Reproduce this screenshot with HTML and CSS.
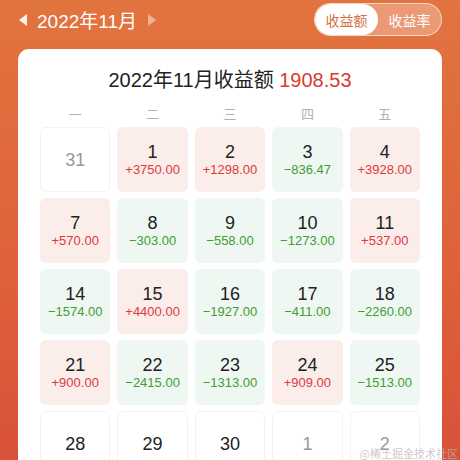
FILE: index.html
```html
<!DOCTYPE html>
<html lang="zh">
<head>
<meta charset="utf-8">
<link rel="stylesheet" href="styles.css">
</head>
<body>
<div class="page">
  <header class="top">
    <div class="month">
      <span class="tri tri-left"></span>
      <span class="month-text">2022年11月</span>
      <span class="tri tri-right"></span>
    </div>
    <div class="toggle">
      <span class="seg active">收益额</span>
      <span class="seg">收益率</span>
    </div>
  </header>
  <section class="card">
    <h1 class="title">2022年11月收益额 <span class="total">1908.53</span></h1>
    <div class="weekdays">
      <span>一</span><span>二</span><span>三</span><span>四</span><span>五</span>
    </div>
    <div class="grid">
      <div class="cell other"><span class="day">31</span></div>
      <div class="cell up"><span class="day">1</span><span class="amt">+3750.00</span></div>
      <div class="cell up"><span class="day">2</span><span class="amt">+1298.00</span></div>
      <div class="cell down"><span class="day">3</span><span class="amt">−836.47</span></div>
      <div class="cell up"><span class="day">4</span><span class="amt">+3928.00</span></div>

      <div class="cell up"><span class="day">7</span><span class="amt">+570.00</span></div>
      <div class="cell down"><span class="day">8</span><span class="amt">−303.00</span></div>
      <div class="cell down"><span class="day">9</span><span class="amt">−558.00</span></div>
      <div class="cell down"><span class="day">10</span><span class="amt">−1273.00</span></div>
      <div class="cell up"><span class="day">11</span><span class="amt">+537.00</span></div>

      <div class="cell down"><span class="day">14</span><span class="amt">−1574.00</span></div>
      <div class="cell up"><span class="day">15</span><span class="amt">+4400.00</span></div>
      <div class="cell down"><span class="day">16</span><span class="amt">−1927.00</span></div>
      <div class="cell down"><span class="day">17</span><span class="amt">−411.00</span></div>
      <div class="cell down"><span class="day">18</span><span class="amt">−2260.00</span></div>

      <div class="cell up"><span class="day">21</span><span class="amt">+900.00</span></div>
      <div class="cell down"><span class="day">22</span><span class="amt">−2415.00</span></div>
      <div class="cell down"><span class="day">23</span><span class="amt">−1313.00</span></div>
      <div class="cell up"><span class="day">24</span><span class="amt">+909.00</span></div>
      <div class="cell down"><span class="day">25</span><span class="amt">−1513.00</span></div>

      <div class="cell empty"><span class="day">28</span></div>
      <div class="cell empty"><span class="day">29</span></div>
      <div class="cell empty"><span class="day">30</span></div>
      <div class="cell other"><span class="day">1</span></div>
      <div class="cell other"><span class="day">2</span></div>
    </div>
  </section>
  <div class="watermark">@稀土掘金技术社区</div>
</div>
</body>
</html>
```

FILE: styles.css
```css
html, body {
  margin: 0;
  padding: 0;
}
body {
  width: 460px;
  height: 460px;
  overflow: hidden;
  font-family: "Noto Sans", "Noto Sans CJK SC", "Liberation Sans", sans-serif;
  background: linear-gradient(180deg, #e2743f 0%, #de6139 60%, #d9513a 100%);
}
.page {
  position: relative;
  width: 460px;
  height: 460px;
  overflow: hidden;
}
.top {
  height: 49px;
  display: flex;
  align-items: flex-start;
  justify-content: space-between;
  padding: 0 18px 0 19px;
  box-sizing: border-box;
}
.month {
  display: flex;
  align-items: center;
  height: 39px;
}
.tri {
  width: 0;
  height: 0;
  border-top: 6.5px solid transparent;
  border-bottom: 6.5px solid transparent;
}
.tri-left {
  border-right: 8px solid rgba(255, 255, 255, 0.9);
}
.tri-right {
  border-left: 8px solid rgba(255, 255, 255, 0.45);
  margin-left: 11px;
}
.month-text {
  color: #fff;
  font-size: 19px;
  margin-left: 10px;
  font-family: "Liberation Sans", "Noto Sans CJK SC", sans-serif;
}
.toggle {
  margin-top: 3px;
  display: flex;
  height: 33px;
  width: 128px;
  box-sizing: border-box;
  border-radius: 17px;
  border: 1px solid rgba(255, 255, 255, 0.6);
  background: rgba(255, 255, 255, 0.28);
  overflow: hidden;
}
.seg {
  flex: 1;
  display: flex;
  align-items: center;
  justify-content: center;
  font-size: 14px;
  color: #fff;
  font-family: "Noto Sans CJK SC", sans-serif;
}
.seg.active {
  background: #fff;
  color: #d8703f;
  border-radius: 17px;
  flex: 0 0 63px;
}
.card {
  margin: 0 18px;
  background: #fff;
  border-radius: 11px;
  padding: 14px 22px 0;
  height: 430px;
  box-sizing: border-box;
}
.title {
  margin: 0;
  text-align: center;
  font-size: 20px;
  font-weight: normal;
  color: #222;
  line-height: 34px;
  font-family: "Liberation Sans", "Noto Sans CJK SC", sans-serif;
}
.total {
  color: #d93a30;
}
.weekdays {
  display: grid;
  grid-template-columns: repeat(5, 1fr);
  column-gap: 7px;
  margin-top: 6px;
  height: 20px;
  align-items: center;
}
.weekdays span {
  text-align: center;
  color: #b0b0b0;
  font-size: 13px;
  font-family: "Noto Sans CJK SC", sans-serif;
}
.grid {
  margin-top: 4px;
  display: grid;
  grid-template-columns: repeat(5, 1fr);
  grid-auto-rows: 65px;
  column-gap: 7px;
  row-gap: 6px;
}
.cell {
  border-radius: 6px;
  display: flex;
  flex-direction: column;
  align-items: center;
  justify-content: center;
  font-family: "Liberation Sans", sans-serif;
  box-sizing: border-box;
}
.cell.up {
  background: #faedea;
}
.cell.down {
  background: #eff7f2;
}
.cell.empty, .cell.other {
  border: 1px solid #f3f3f3;
  background: #fff;
}
.day {
  font-size: 18px;
  color: #222;
  line-height: 20px;
}
.cell.other .day {
  color: #999;
}
.amt {
  font-size: 13px;
  line-height: 16px;
  margin-top: 0;
}
.cell.up .amt {
  color: #e0393b;
}
.cell.down .amt {
  color: #3e9e33;
}
.watermark {
  position: absolute;
  right: 2px;
  bottom: 0;
  font-size: 11px;
  line-height: 14px;
  color: rgba(185, 185, 185, 0.75);
  font-family: "Noto Sans CJK SC", sans-serif;
}
```
